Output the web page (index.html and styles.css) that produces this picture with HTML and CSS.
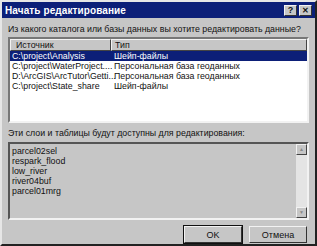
FILE: index.html
```html
<!DOCTYPE html>
<html lang="ru">
<head>
  <meta charset="UTF-8" />
  <title>Начать редактирование</title>
  <link rel="stylesheet" href="styles.css">
</head>
<body>
  <div class="dialog">
    <div class="titlebar">
      <span class="title">Начать редактирование</span>
      <div class="caption-btns">
        <span class="cap-btn">?</span>
        <span class="cap-btn close">&#x2715;</span>
      </div>
    </div>
    <div class="content">
      <div class="label">Из какого каталога или базы данных вы хотите редактировать данные?</div>
      <div class="listview">
        <div class="lv-head">
          <div class="col-src hcell">Источник</div>
          <div class="col-type hcell">Тип</div>
        </div>
        <div class="lv-row selected">
          <div class="col-src">C:\project\Analysis</div>
          <div class="col-type">Шейп-файлы</div>
        </div>
        <div class="lv-row">
          <div class="col-src">C:\project\WaterProject....</div>
          <div class="col-type">Персональная база геоданных</div>
        </div>
        <div class="lv-row">
          <div class="col-src">D:\ArcGIS\ArcTutor\Getti...</div>
          <div class="col-type">Персональная база геоданных</div>
        </div>
        <div class="lv-row">
          <div class="col-src">C:\project\State_share</div>
          <div class="col-type">Шейп-файлы</div>
        </div>
      </div>
      <div class="label second">Эти слои и таблицы будут доступны для редактирования:</div>
      <div class="listbox">
        <div class="items">
          <div>parcel02sel</div>
          <div>respark_flood</div>
          <div>low_river</div>
          <div>river04buf</div>
          <div>parcel01mrg</div>
        </div>
        <div class="scrollbar">
          <span class="arrow">&#9650;</span>
          <span class="track"></span>
          <span class="arrow">&#9660;</span>
        </div>
      </div>
      <div class="buttons">
        <button class="btn default">OK</button>
        <button class="btn">Отмена</button>
      </div>
    </div>
  </div>
</body>
</html>
```

FILE: styles.css
```css
body {
  margin: 0;
  padding: 0;
  background-color: #c6c6c6;
  font-family: 'Liberation Sans', Arial, sans-serif;
  font-size: 8.8px;
  color: #111;
}
.dialog {
  width: 317px;
  height: 246px;
  box-sizing: border-box;
  background-color: #c6c6c6;
  border: 2px solid;
  border-color: #e6e6e6 #222 #222 #e6e6e6;
  display: flex;
  flex-direction: column;
}
.titlebar {
  height: 16px;
  background-color: #0c1f78;
  color: white;
  display: flex;
  align-items: center;
  justify-content: space-between;
  padding: 0 3px 0 3px;
}
.title {
  font-weight: bold;
  font-size: 10px;
  letter-spacing: 0.1px;
}
.caption-btns {
  display: flex;
  gap: 2px;
}
.cap-btn {
  width: 13px;
  height: 11px;
  box-sizing: border-box;
  background-color: #c6c6c6;
  border: 1px solid;
  border-color: #f2f2f2 #333 #333 #f2f2f2;
  color: #111;
  font-weight: bold;
  font-size: 9px;
  line-height: 9px;
  text-align: center;
}
.cap-btn.close {
  font-size: 8px;
}
.content {
  padding: 5px 6px 0 6px;
  display: flex;
  flex-direction: column;
}
.label {
  height: 12px;
  line-height: 12px;
  margin-bottom: 2px;
}
.label.second {
  margin-top: 4px;
  margin-bottom: 3px;
}
.listview {
  height: 86px;
  box-sizing: border-box;
  background-color: white;
  border: 2px solid;
  border-color: #777 #f2f2f2 #f2f2f2 #777;
}
.lv-head {
  display: flex;
  height: 12px;
}
.hcell {
  box-sizing: border-box;
  background-color: #c6c6c6;
  border: 1px solid;
  border-color: #f2f2f2 #444 #444 #f2f2f2;
  line-height: 10px;
  padding-left: 4px;
}
.lv-row {
  display: flex;
  height: 10px;
  line-height: 10px;
}
.col-src {
  width: 101px;
  padding-left: 2px;
  box-sizing: border-box;
  white-space: nowrap;
}
.hcell.col-src {
  padding-left: 5px;
}
.col-type {
  flex: 1;
  padding-left: 3px;
  white-space: nowrap;
}
.lv-row.selected {
  background-color: #0c1f78;
  color: white;
}
.listbox {
  height: 78px;
  box-sizing: border-box;
  border: 2px solid;
  border-color: #555 #f2f2f2 #f2f2f2 #555;
  display: flex;
}
.items {
  flex: 1;
  padding: 2px 0 0 2px;
  line-height: 10px;
}
.scrollbar {
  width: 11px;
  display: flex;
  flex-direction: column;
  background-color: #e4e4e4;
}
.arrow {
  height: 11px;
  box-sizing: border-box;
  background-color: #c6c6c6;
  border: 1px solid;
  border-color: #f2f2f2 #444 #444 #f2f2f2;
  color: #888;
  font-size: 5px;
  line-height: 9px;
  text-align: center;
}
.track {
  flex: 1;
}
.buttons {
  display: flex;
  justify-content: flex-end;
  gap: 7px;
  margin-top: 6px;
  padding-right: 2px;
}
.btn {
  width: 58px;
  height: 17px;
  font-family: 'Liberation Sans', Arial, sans-serif;
  font-size: 9px;
  color: #111;
  background-color: #c6c6c6;
  border: 1px solid;
  border-color: #f2f2f2 #333 #333 #f2f2f2;
  padding: 0;
}
.btn.default {
  outline: 1px solid #111;
}
```
